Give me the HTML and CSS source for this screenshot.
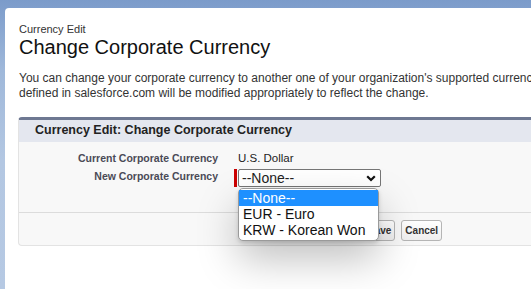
FILE: index.html
```html
<!DOCTYPE html>
<html>
<head>
    <link rel="stylesheet" href="styles.css">
</head>
<body>
    <div class="card">
        <div class="page-header">
            <div class="page-type">Currency Edit</div>
            <h1 class="page-title">Change Corporate Currency</h1>
        </div>

        <p class="intro">You can change your corporate currency to another one of your organization's supported currencies. All amounts defined in salesforce.com will be modified appropriately to reflect the change.</p>

        <div class="page-block">
            <div class="pb-header">
                <h2>Currency Edit: Change Corporate Currency</h2>
            </div>
            <div class="pb-body">
                <div class="field-row">
                    <div class="field-label">Current Corporate Currency</div>
                    <div class="field-value">U.S. Dollar</div>
                </div>
                <div class="field-row">
                    <div class="field-label">New Corporate Currency</div>
                    <div class="field-value required">
                        <div class="select-wrap">
                            <div class="select-box">
                                <span>--None--</span>
                                <svg class="chevron" width="10" height="7" viewBox="0 0 10 7">
                                    <path d="M1.2 1.2 L5 5 L8.8 1.2" fill="none" stroke="#111" stroke-width="2.2"/>
                                </svg>
                            </div>
                            <ul class="select-popup">
                                <li class="selected">--None--</li>
                                <li>EUR - Euro</li>
                                <li>KRW - Korean Won</li>
                            </ul>
                        </div>
                    </div>
                </div>
            </div>
            <div class="pb-footer">
                <button class="btn">Save</button>
                <button class="btn">Cancel</button>
            </div>
        </div>
    </div>
</body>
</html>
```

FILE: styles.css
```css
/* Setup page styling */
html, body {
    height: 100%;
}

body {
    margin: 0;
    padding: 8px 0 0 5px;
    box-sizing: border-box;
    overflow: hidden;
    font-family: Arial, "Liberation Sans", sans-serif;
    color: #181818;
    background: linear-gradient(#7b9bca 0, #9fb8da 70px, #b3c7e2 160px, #b6c9e3 100%);
}

.card {
    background-color: #fff;
    border-radius: 4px 0 0 0;
    height: 100%;
    padding: 15px 0 0 13px;
    box-sizing: border-box;
    width: 560px;
}

.page-header {
    padding-left: 1px;
}

.page-type {
    font-size: 11px;
    color: #333;
    line-height: 12px;
}

.page-title {
    margin: 0;
    font-size: 20px;
    font-weight: normal;
    line-height: 24px;
    color: #111;
}

.intro {
    margin: 12px 0 0 1px;
    font-size: 12px;
    line-height: 15px;
    color: #333;
    width: 630px;
}

.page-block {
    margin-top: 16px;
    background-color: #f8f8f8;
    border: 1px solid #e3e3e3;
    border-top: 3px solid #6e7892;
    border-radius: 4px 0 0 4px;
    border-right: none;
    width: 530px;
}

.pb-header {
    background-color: #e4e7ef;
    height: 22px;
    padding-left: 16px;
}

.pb-header h2 {
    margin: 0;
    font-size: 12.5px;
    line-height: 21px;
    font-weight: bold;
    color: #222;
}

.pb-body {
    padding: 8px 0 23px;
    border-bottom: 1px solid #dcdcdc;
}

.field-row {
    display: flex;
    align-items: flex-start;
    margin-bottom: 2px;
}

.field-label {
    width: 199px;
    text-align: right;
    font-size: 10.5px;
    font-weight: bold;
    color: #4a4a56;
    line-height: 14px;
    padding-top: 1px;
}

.field-value {
    margin-left: 20px;
    font-size: 11.5px;
    line-height: 16px;
    color: #222;
}

.required {
    border-left: 3px solid #c00;
    margin-left: 16px;
    padding-left: 1px;
    margin-top: 1px;
}

.select-wrap {
    position: relative;
}

.select-box {
    height: 16px;
    border: 1px solid #767676;
    border-radius: 2px;
    background-color: #fff;
    display: flex;
    align-items: center;
    justify-content: space-between;
    padding: 0 4px 0 3px;
    box-sizing: content-box;
    width: 134px;
    font-size: 14px;
    color: #222;
}

.select-popup {
    position: absolute;
    left: 0;
    top: 19px;
    width: 139px;
    margin: 0;
    padding: 1px 0 2px;
    list-style: none;
    background-color: #fff;
    border: 1px solid #9a9a9a;
    border-radius: 5px;
    box-shadow: 0 18px 40px rgba(0, 0, 0, 0.25), 0 2px 4px rgba(0, 0, 0, 0.15);
    font-size: 14px;
    line-height: 16px;
    color: #111;
    z-index: 2;
}

.select-popup li {
    padding: 0 4px;
}

.select-popup li.selected {
    background-color: #1e90ff;
    color: #fff;
}

.pb-footer {
    display: flex;
    gap: 6px;
    padding: 7px 0 4px 345px;
}

.btn {
    font-family: Arial, "Liberation Sans", sans-serif;
    font-size: 10px;
    font-weight: bold;
    color: #333;
    background: linear-gradient(#fff, #efefef);
    border: 1px solid #b5b5b5;
    border-radius: 3px;
    height: 21px;
    padding: 0 3px;
}
```
